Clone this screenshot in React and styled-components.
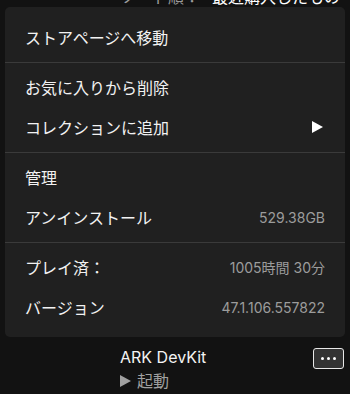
import React from 'react'
import styled, { createGlobalStyle } from 'styled-components'

const GlobalStyle = createGlobalStyle`
  body {
    margin: 0;
    background: #121212;
    font-family: "Inter", "Noto Sans CJK JP", sans-serif;
    color: #fff;
  }
`

const Page = styled.div`
  width: 350px;
  height: 394px;
  overflow: hidden;
`

const SortBar = styled.div`
  height: 7px;
  overflow: hidden;
  display: flex;
  justify-content: flex-end;
  padding-right: 10px;
`

const SortText = styled.div`
  margin-top: -12px;
  font-size: 16px;
  line-height: 18px;
  white-space: nowrap;
  display: flex;
  gap: 12px;
`

const SortLabel = styled.span`
  color: #9a9a9a;
`

const Menu = styled.div`
  margin: 0 5px;
  background: #202020;
  border-radius: 5px;
  padding: 10px 0;
`

const Section = styled.div`
  padding: 4px 0 5px;
  &:first-child { padding-top: 0; }
  &:last-child { padding-bottom: 0; }
  & + & { border-top: 1px solid #3a3a3a; }
`

const Row = styled.div`
  height: 40px;
  display: flex;
  align-items: center;
  justify-content: space-between;
  padding: 0 20px;
  font-size: 16px;
  color: #f2f2f2;
`

const Value = styled.span`
  font-size: 14px;
  color: #9c9c9c;
`

const Arrow = styled.span`
  width: 0;
  height: 0;
  border-top: 6px solid transparent;
  border-bottom: 6px solid transparent;
  border-left: 11px solid #fff;
  margin-right: 2px;
`

const Game = styled.div`
  display: flex;
  justify-content: space-between;
  padding: 11px 6px 0 120px;
`

const GameInfo = styled.div`
  display: flex;
  flex-direction: column;
  gap: 6px;
`

const Title = styled.div`
  font-size: 16px;
  line-height: 18px;
  color: #f4f4f4;
`

const Launch = styled.div`
  font-size: 16px;
  line-height: 18px;
  color: #a0a0a0;
  display: flex;
  align-items: center;
  gap: 6px;
`

const PlayIcon = styled.span`
  width: 0;
  height: 0;
  border-top: 6px solid transparent;
  border-bottom: 6px solid transparent;
  border-left: 11px solid #a0a0a0;
`

const MoreButton = styled.button`
  width: 31px;
  height: 21px;
  box-sizing: border-box;
  border: 1px solid #e8e8e8;
  border-radius: 3px;
  background: #333;
  display: flex;
  align-items: center;
  justify-content: center;
  gap: 3px;
  padding: 0;
`

const Dot = styled.span`
  width: 3px;
  height: 3px;
  border-radius: 50%;
  background: #fff;
`

export default function App() {
  return (
    <Page>
      <GlobalStyle />
      <SortBar>
        <SortText>
          <SortLabel>ソート順：</SortLabel>
          <span>最近購入したもの</span>
        </SortText>
      </SortBar>
      <Menu>
        <Section>
          <Row>ストアページへ移動</Row>
        </Section>
        <Section>
          <Row>お気に入りから削除</Row>
          <Row>コレクションに追加<Arrow /></Row>
        </Section>
        <Section>
          <Row>管理</Row>
          <Row>アンインストール<Value>529.38GB</Value></Row>
        </Section>
        <Section>
          <Row>プレイ済：<Value>1005時間 30分</Value></Row>
          <Row>バージョン<Value>47.1.106.557822</Value></Row>
        </Section>
      </Menu>
      <Game>
        <GameInfo>
          <Title>ARK DevKit</Title>
          <Launch><PlayIcon />起動</Launch>
        </GameInfo>
        <MoreButton><Dot /><Dot /><Dot /></MoreButton>
      </Game>
    </Page>
  )
}
